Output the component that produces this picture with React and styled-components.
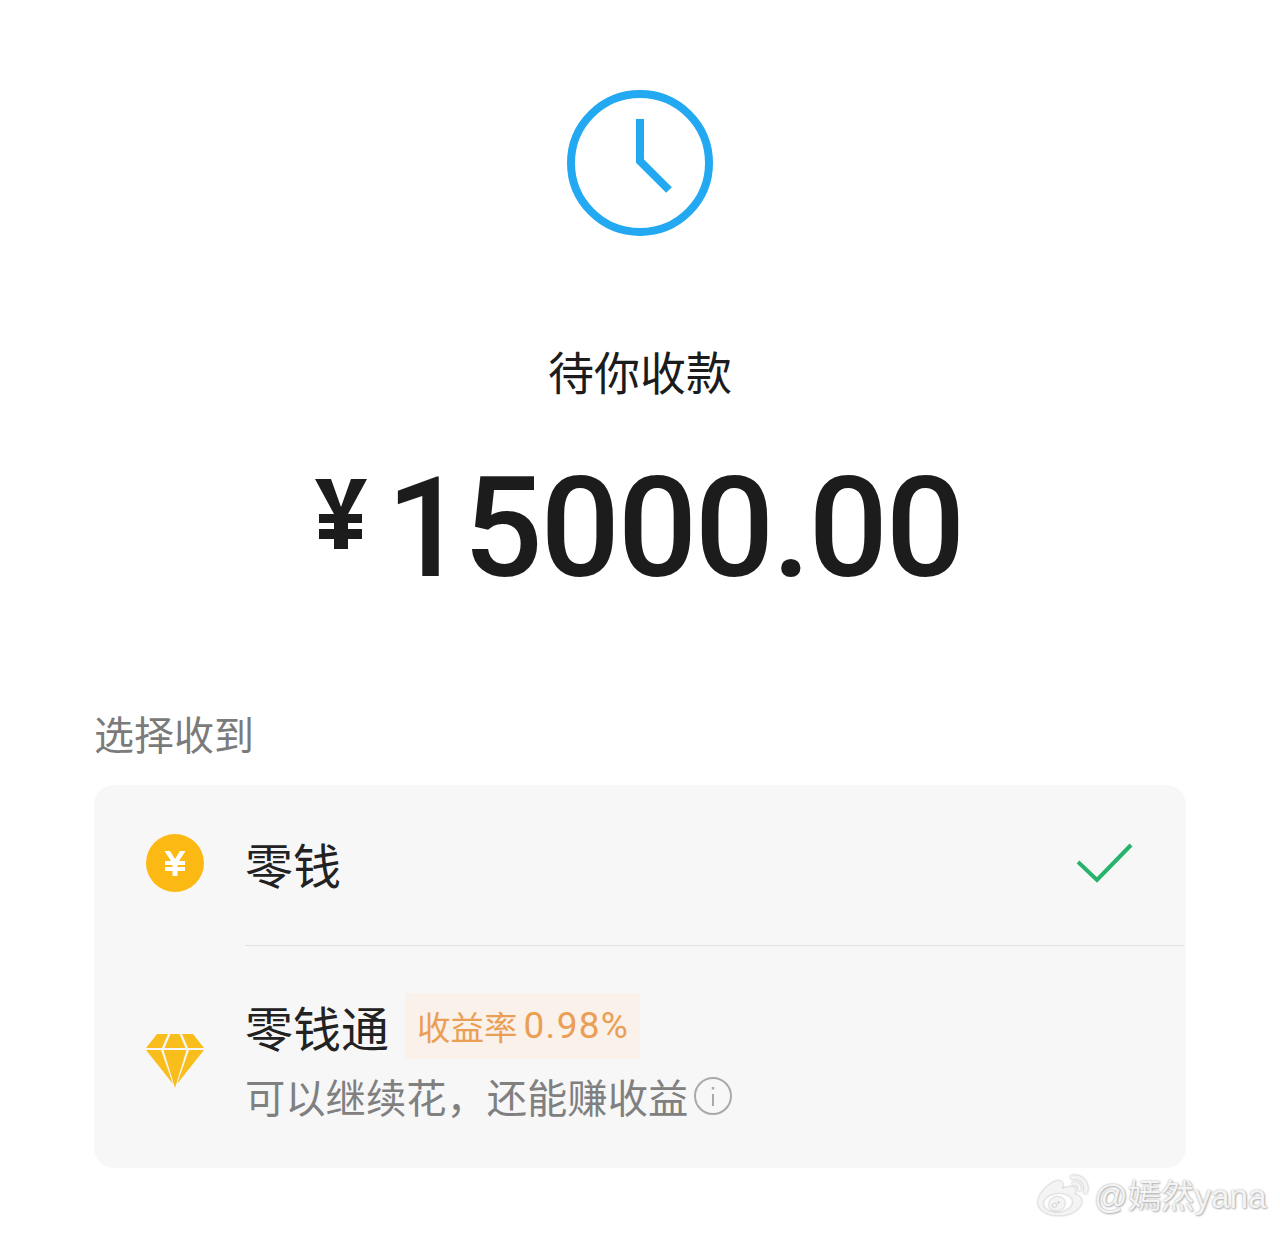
import React from 'react'
import styled, { createGlobalStyle } from 'styled-components'
import { FaWeibo } from 'react-icons/fa'

const cjk = '"Noto Sans CJK SC", "Noto Sans", sans-serif'

const GlobalStyle = createGlobalStyle`
  html, body {
    margin: 0;
    background: #ffffff;
  }
  body {
    font-family: ${cjk};
    color: #1c1c1c;
  }
`

const Page = styled.div`
  position: relative;
  width: 1280px;
  height: 1233px;
  overflow: hidden;
  display: flex;
  flex-direction: column;
  align-items: center;
  padding-top: 90px;
  box-sizing: border-box;
  background: #ffffff;
`

const ClockIcon = styled.svg`
  display: block;
  width: 146px;
  height: 146px;
  color: #22a9f2;
`

const Title = styled.div`
  margin-top: 101px;
  font-size: 46px;
  line-height: 66px;
  height: 66px;
`

const Amount = styled.div`
  display: flex;
  align-items: flex-start;
  margin-top: 55px;
  height: 140px;
  margin-left: -2px;
  font-family: Roboto, "Liberation Sans", sans-serif;
  color: #1c1c1c;
`

const Currency = styled.svg`
  display: block;
  width: 52px;
  height: 70px;
  margin-top: 21px;
  margin-right: 19px;
`

const Digits = styled.div`
  font-size: 140px;
  font-weight: 500;
  line-height: 140px;
  letter-spacing: -2.4px;
`

const Section = styled.div`
  align-self: stretch;
  padding: 0 94px;
  margin-top: 105px;
`

const SectionLabel = styled.div`
  font-size: 40px;
  line-height: 60px;
  height: 60px;
  color: #7b7b7b;
`

const Card = styled.div`
  margin-top: 22px;
  height: 383px;
  border-radius: 20px;
  background: #f7f7f8;
  display: flex;
  flex-direction: column;
`

const Row = styled.div`
  display: flex;
  align-items: center;
  height: ${(p) => p.$height}px;
  box-sizing: border-box;
  padding: ${(p) => p.$padTop || 0}px 53px ${(p) => p.$padBottom || 0}px 51px;
  flex: none;
`

const IconSlot = styled.div`
  width: 60px;
  margin-right: 40px;
  flex: none;
  display: flex;
  justify-content: center;
`

const Coin = styled.svg`
  display: block;
  width: 58px;
  height: 58px;
`

const Diamond = styled.svg`
  display: block;
  width: 60px;
  height: 56px;
  margin-top: 4px;
`

const Divider = styled.div`
  height: 1px;
  margin-left: 151px;
  margin-right: 2px;
  background: #e2e2e2;
  flex: none;
`

const RowName = styled.div`
  font-size: 48px;
  line-height: 60px;
  color: #222222;
`

const Check = styled.svg`
  display: block;
  width: 56px;
  height: 40px;
  margin-left: auto;
`

const Stack = styled.div`
  display: flex;
  flex-direction: column;
`

const NameLine = styled.div`
  display: flex;
  align-items: center;
  gap: 16px;
  height: 66px;
`

const RateTag = styled.div`
  height: 66px;
  width: 235px;
  padding-left: 12px;
  box-sizing: border-box;
  display: flex;
  align-items: center;
  background: #f9f1ea;
  color: #ea9f54;
  font-size: 33.5px;
  white-space: nowrap;
`

const RateNumber = styled.span`
  margin-left: 6px;
  font-family: Roboto, sans-serif;
  font-size: 37px;
  letter-spacing: 1.3px;
`

const SubLine = styled.div`
  display: flex;
  align-items: center;
  height: 60px;
  margin-top: 7px;
  font-size: 40.3px;
  color: #808080;
  white-space: nowrap;
`

const InfoIcon = styled.svg`
  display: block;
  width: 40px;
  height: 40px;
  margin-left: 5px;
`

const Watermark = styled.div`
  position: absolute;
  left: 1036px;
  top: 1172px;
  display: flex;
  align-items: center;
  gap: 4px;
  color: #f4f4f4;
  font-family: "Liberation Sans", ${cjk};
  font-size: 33.3px;
  line-height: 50px;
  white-space: nowrap;
  text-shadow: 0 0 2px #a8a8a8, 1px 1px 2px #b4b4b4;
  svg {
    display: block;
    width: 54px;
    height: 50px;
    filter: drop-shadow(0 0 1px #a8a8a8);
  }
`

const App = () => (
  <Page>
    <GlobalStyle />
    <ClockIcon viewBox="0 0 146 146" fill="none" stroke="currentColor" strokeWidth="8">
      <circle cx="73" cy="73" r="69" />
      <path d="M73 29V71L102 100" />
    </ClockIcon>

    <Title>待你收款</Title>

    <Amount>
      <Currency viewBox="0 0 52 70" fill="#1c1c1c">
        <path d="M0 0H16L26 28L36 0H52L33 35H47V44H33V50H47V60H33V70H19V60H4V50H19V44H4V35H19Z" />
      </Currency>
      <Digits>15000.00</Digits>
    </Amount>

    <Section>
      <SectionLabel>选择收到</SectionLabel>
      <Card>
        <Row $height={160} $padBottom={4}>
          <IconSlot>
            <Coin viewBox="0 0 58 58">
              <circle cx="29" cy="29" r="29" fill="#fdb913" />
              <path
                d="M18.5 17H24L29 25L34 17H39.5L33 27H39V31H31.5V33H39V37H31.5V42H26.5V37H19V33H26.5V31H19V27H25Z"
                fill="#ffffff"
              />
            </Coin>
          </IconSlot>
          <RowName>零钱</RowName>
          <Check viewBox="0 0 56 40" fill="none" stroke="#26b36b" strokeWidth="4">
            <path d="M1 19L20 37L54 2" />
          </Check>
        </Row>
        <Divider />
        <Row $height={222} $padTop={4}>
          <IconSlot>
            <Diamond viewBox="0 0 60 56" fill="#f9bd1c">
              <path d="M12 1H23L17 15H1Z" />
              <path d="M25.5 1H34.5L40.5 15H19.5Z" />
              <path d="M37 1H48L59 15H43Z" />
              <path d="M1 17H16L28 51Z" />
              <path d="M18.5 17H41.5L30 55Z" />
              <path d="M44 17H59L32 51Z" />
            </Diamond>
          </IconSlot>
          <Stack>
            <NameLine>
              <RowName>零钱通</RowName>
              <RateTag>
                收益率<RateNumber>0.98%</RateNumber>
              </RateTag>
            </NameLine>
            <SubLine>
              可以继续花，还能赚收益
              <InfoIcon viewBox="0 0 40 40" fill="none" stroke="#a9a9a9">
                <circle cx="20" cy="20" r="18" strokeWidth="2" />
                <path d="M20 18V30" strokeWidth="2" />
                <path d="M20 11V13.5" strokeWidth="2.4" />
              </InfoIcon>
            </SubLine>
          </Stack>
        </Row>
      </Card>
    </Section>

    <Watermark>
      <FaWeibo />
      <span>@嫣然yana</span>
    </Watermark>
  </Page>
)

export default App
